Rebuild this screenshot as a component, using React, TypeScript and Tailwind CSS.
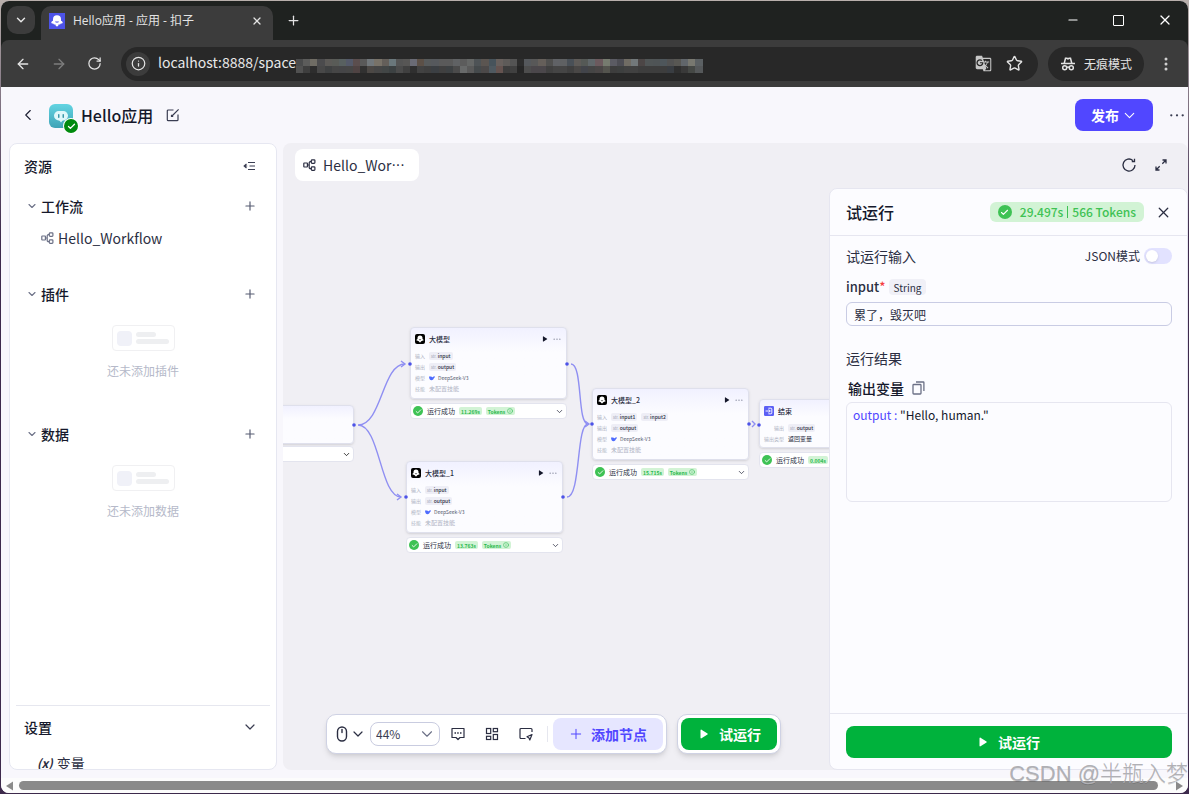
import type { ReactNode } from 'react';
import { ArrowLeft, ArrowRight, Check, ChevronDown, ChevronLeft, Info, Minus, Plus, RotateCw, Star, X } from 'lucide-react';
import { MdGTranslate } from 'react-icons/md';

const maskTop = [
  '#4a4b4c', '#5c5c5b', '#6f6c64', '#4b4b4d', '#5c5a57', '#595b57', '#586060', '#545969', '#5b4e4e', '#595959',
  '#71777b', '#787268', '#645f5a', '#6a777b', '#545454', '#575655', '#6a6b75', '#5c5047', '#575a5b', '#56595d',
  '#5a5a5a', '#5a5a5a', '#606264', '#5c5c5c', '#656766', '#4e5356', '#5b5551', '#47535b', '#68605d', '#5e5b59',
  '#545454', '#2d2d2d', '#55585c', '#585858', '#655f5a', '#50504f', '#606266', '#5f6163', '#495057', '#5e5b58',
  '#555956', '#60676a', '#6c5a5e', '#767b6f', '#5b5b63', '#4d4d54', '#706c64', '#72787a', '#4c4646', '#505556',
  '#4f5456', '#4e565b', '#525252', '#585753', '#61666b', '#787870', '#5b6063',
];

const maskBottom = [
  '#515151', '#3e3e3e', '#2d2d2d', '#484848', '#3f4142', '#464646', '#454547', '#464646', '#4f4343', '#313131',
  '#4c4845', '#464646', '#424646', '#3c4142', '#4b4b4b', '#404040', '#2f2f2f', '#424242', '#3f3f3f', '#3b3f43',
  '#404040', '#3d4143', '#4b4b4b', '#686a6a', '#5a5a5a', '#454a4c', '#4c4949', '#4f5960', '#655350', '#3d3d3d',
  '#404040', '#262626', '#4d4d4d', '#4b474b', '#4b474b', '#404040', '#454545', '#454545', '#3f3f3f', '#494746',
  '#42444a', '#454545', '#4a4646', '#54544e', '#3d3d3d', '#3d3f3f', '#414141', '#414141', '#3d3d3d', '#3d3d3d',
  '#3d3d3d', '#3d3d3d', '#393d42', '#2f2f2f', '#393939', '#454845', '#55585a',
];

const AddressMask = () => (
  <svg width="407" height="14" viewBox="0 0 407 14" shapeRendering="crispEdges" aria-hidden="true">
    {maskTop.map((fill, i) => (
      <rect key={i} x={i * 7.13} y="0" width="8" height="7" fill={fill} />
    ))}
    {maskBottom.map((fill, i) => (
      <rect key={i} x={i * 7.13} y="7" width="8" height="7" fill={fill} />
    ))}
  </svg>
);

const FlowIcon = ({ className }: { className?: string }) => (
  <svg className={className} width="13" height="13" viewBox="0 0 13 13" fill="none" stroke="currentColor" strokeWidth="1.2">
    <rect x="0.8" y="4" width="3.6" height="4" rx="0.4" />
    <rect x="8.3" y="0.8" width="3.6" height="3.6" rx="0.8" />
    <rect x="8.3" y="7.8" width="3.6" height="3.6" rx="0.8" />
    <path d="M4.4 6h1.8M8.3 2.600H7.400a1.200 1.200 0 0 0-1.200 1.200v4.600a1.200 1.200 0 0 0 1.200 1.200h.9" />
  </svg>
);

const CozeLogo = ({ className, face }: { className?: string; face: string }) => (
  <svg className={className} viewBox="0 0 16 16">
    <path
      d="M8 2.200a4 4 0 0 0-4 4v1.600c-.9.300-1.700.900-1.700 1.700 0 1 1 1.300 1.900 1 .2.700.6 1 1.200 1 .4 0 .6-.1.9-.3.2 1.400.8 2.200 1.700 2.200s1.500-.8 1.700-2.200c.3.200.5.300.9.300.6 0 1-.3 1.200-1 .9.300 1.900 0 1.900-1 0-.8-.8-1.400-1.700-1.700V6.200a4 4 0 0 0-4-4z"
      fill="#fff"
    />
    <path d="M6 8.600c.6 1.600 3.400 1.600 4 0z" fill={face} />
  </svg>
);

const IncognitoIcon = () => (
  <svg width="16" height="16" viewBox="0 0 16 16" fill="none" stroke="#e3e3e3" strokeWidth="1.500">
    <path d="M4.300 7 5.500 2.200h1.200l1.300.6 1.300-.6h1.200L11.700 7M1 7.400h14" />
    <circle cx="4.700" cy="11.800" r="2" />
    <circle cx="11.300" cy="11.800" r="2" />
    <path d="M6.700 11.300c.8-.5 1.800-.5 2.600 0" />
  </svg>
);

const PlayIcon = ({ className }: { className?: string }) => (
  <svg className={className} viewBox="0 0 10 10" fill="currentColor">
    <path d="M1.500 1.300c0-.6.6-.9 1-.6l6 3.700c.4.3.4.900 0 1.200l-6 3.700c-.4.3-1 0-1-.6z" />
  </svg>
);

const DotsIcon = ({ className }: { className?: string }) => (
  <svg className={className} viewBox="0 0 14 4" fill="currentColor">
    <circle cx="2" cy="2" r="1" />
    <circle cx="7" cy="2" r="1" />
    <circle cx="12" cy="2" r="1" />
  </svg>
);

const BrowserChrome = () => (
  <header className="shrink-0 font-normal text-[#e3e3e3]">
    <div className="flex h-[39px] items-end bg-[#1f2220] pl-1.5">
      <button aria-label="搜索标签页" className="mb-1.5 flex h-7 w-7 items-center justify-center rounded-[10px] bg-[#3c3c3c]">
        <ChevronDown size={14} strokeWidth={2.5} />
      </button>
      <div className="ml-1.5 flex h-[34px] w-[232px] items-center rounded-t-[10px] bg-[#3c3c3c] pb-1 pl-2 pr-2.5">
        <span className="flex h-4 w-4 items-center justify-center bg-[#4d53e8]">
          <CozeLogo className="h-4 w-4" face="#4d53e8" />
        </span>
        <span className="ml-2 flex-1 font-['Open_Sans','Noto_Sans_CJK_SC',sans-serif] text-xs">Hello应用 - 应用 - 扣子</span>
        <button aria-label="关闭标签页">
          <X size={12} strokeWidth={2.5} />
        </button>
      </div>
      <button aria-label="新标签页" className="mb-3 ml-[13px]">
        <Plus size={15} strokeWidth={2} />
      </button>
      <div className="mb-3 ml-auto flex items-center gap-8 pr-[15px] text-white">
        <button aria-label="最小化"><Minus size={14} strokeWidth={1.800} /></button>
        <button aria-label="最大化">
          <svg width="13" height="13" viewBox="0 0 13 13" fill="none" stroke="currentColor">
            <rect x="1.500" y="1.500" width="10" height="10" rx=".5" />
          </svg>
        </button>
        <button aria-label="关闭"><X size={16} strokeWidth={1.800} /></button>
      </div>
    </div>
    <div className="bg-[#1f2220]">
      <div className="flex h-[47px] items-center rounded-t-lg bg-[#3c3c3c] pl-3.5 pr-5">
        <button aria-label="后退"><ArrowLeft size={16} /></button>
        <button aria-label="前进" className="ml-5 text-[#7d7d7d]"><ArrowRight size={16} /></button>
        <button aria-label="刷新" className="ml-5"><RotateCw size={15} /></button>
        <div className="ml-[19px] flex h-[34px] min-w-0 flex-1 items-center overflow-hidden rounded-full bg-[#282828] pl-[5px] pr-[15px]">
          <span className="flex h-6 w-6 shrink-0 items-center justify-center rounded-full bg-[#3c3c3c]">
            <Info size={15} />
          </span>
          <span className="ml-2 pb-[3px] text-sm text-[#e8e8e8]">localhost:8888/space</span>
          <div className="min-w-0 shrink overflow-hidden pt-1">
            <AddressMask />
          </div>
          <button aria-label="翻译" className="ml-auto text-[#c7c7c7]"><MdGTranslate size={17} /></button>
          <button aria-label="收藏" className="ml-3.5"><Star size={17} /></button>
        </div>
        <div className="ml-2.5 flex h-[34px] items-center gap-2 rounded-full bg-[#282828] px-3 text-xs">
          <IncognitoIcon />
          无痕模式
        </div>
        <button aria-label="菜单" className="ml-5">
          <svg width="4" height="14" viewBox="0 0 4 14" fill="#d0d0d0">
            <circle cx="2" cy="2" r="1.500" />
            <circle cx="2" cy="7" r="1.500" />
            <circle cx="2" cy="12" r="1.500" />
          </svg>
        </button>
      </div>
    </div>
  </header>
);

const AppHeader = () => (
  <div className="flex h-14 shrink-0 items-center pl-[18px] pr-[3px]">
    <button aria-label="返回"><ChevronLeft size={18} strokeWidth={1.500} className="text-[#1c1f33]" /></button>
    <div className="relative ml-3 mt-0.5 h-6 w-6">
      <svg width="24" height="24" viewBox="0 0 24 24">
        <defs>
          <linearGradient id="app-bg" x1="0" y1="0" x2="0" y2="1">
            <stop offset="0" stopColor="#63d4e2" />
            <stop offset="1" stopColor="#3fa3b6" />
          </linearGradient>
        </defs>
        <rect width="24" height="24" rx="6" fill="url(#app-bg)" />
        <rect x="5" y="7" width="14" height="9.500" rx="4.700" fill="#e0f8fa" />
        <path d="M10 16h4l-2 2.500z" fill="#e0f8fa" />
        <rect x="9" y="10" width="1.500" height="4" rx=".7" fill="#3a97a8" />
        <rect x="13.500" y="10" width="1.500" height="4" rx=".7" fill="#3a97a8" />
      </svg>
      <span className="absolute -bottom-[5px] -right-[5px] flex h-3.5 w-3.5 items-center justify-center rounded-full bg-[#008a0e] text-white ring-1 ring-white">
        <Check size={9} strokeWidth={3.500} />
      </span>
    </div>
    <h1 className="ml-2 text-base font-medium text-[#15182b]">Hello应用</h1>
    <button aria-label="编辑" className="ml-[13px] text-[#3a3d52]">
      <svg width="14" height="14" viewBox="0 0 14 14" fill="none" stroke="currentColor" strokeWidth="1.200">
        <path d="M7.500 2H2.300a1 1 0 0 0-1 1v8.700a1 1 0 0 0 1 1H11a1 1 0 0 0 1-1V6.500M12.600 1.400 6 8M5.500 6.800v1.700h1.700" />
      </svg>
    </button>
    <button className="ml-auto flex h-8 items-center gap-0.5 rounded-lg bg-[#5147ff] pl-4 pr-[15px] text-sm font-bold text-white">
      发布
      <ChevronDown size={17} strokeWidth={1.500} />
    </button>
    <button aria-label="更多" className="ml-4 text-[#3a3d52]"><DotsIcon className="w-4" /></button>
  </div>
);

const EmptyState = ({ text }: { text: string }) => (
  <div className="mt-[15px] flex flex-col items-center gap-3">
    <div className="flex h-[26px] w-[63px] items-center gap-1 rounded border border-[#f0f0f2] pl-1">
      <span className="h-[15px] w-[15px] rounded bg-[#f0f1f8]" />
      <span className="flex flex-col gap-0.5">
        <span className="h-[5px] w-5 rounded-sm bg-[#eeeff1]" />
        <span className="h-[5px] w-[33px] rounded-sm bg-[#eeeff1]" />
      </span>
    </div>
    <p className="text-xs leading-4 text-[#b5b9c9]">{text}</p>
  </div>
);

const SectionHead = ({ title }: { title: string }) => (
  <div className="flex h-8 items-center pl-4 pr-[19px]">
    <ChevronDown size={12} strokeWidth={2.200} className="text-[#6b7086]" />
    <h3 className="ml-[3px] text-sm font-medium text-[#15182b]">{title}</h3>
    <button aria-label={`添加${title}`} className="ml-auto text-[#555a70]"><Plus size={14} strokeWidth={2} /></button>
  </div>
);

const Sidebar = () => (
  <aside className="flex w-[268px] shrink-0 flex-col overflow-hidden rounded-lg border border-[#e6e7f1] bg-white">
    <div className="flex h-11 items-center pl-3.5 pr-5">
      <h2 className="text-sm font-medium text-[#15182b]">资源</h2>
      <button aria-label="收起" className="ml-auto text-[#3a3d52]">
        <svg width="13" height="12" viewBox="0 0 13 12" fill="none" stroke="currentColor" strokeWidth="1.200">
          <path d="M5 2.500h7M6.500 6H12M5 9.500h7M3.500 4 1.200 6l2.300 2M1.200 6h3" />
        </svg>
      </button>
    </div>
    <div className="mt-0.5 h-[72px]">
      <SectionHead title="工作流" />
      <a href="#workflow" className="flex h-8 items-center gap-1 pl-[31px] text-sm text-[#2b2e42]">
        <FlowIcon className="text-[#6b7086]" />
        Hello_Workflow
      </a>
    </div>
    <div className="mt-4 h-[124px]">
      <SectionHead title="插件" />
      <EmptyState text="还未添加插件" />
    </div>
    <div className="mt-4 flex-1">
      <SectionHead title="数据" />
      <EmptyState text="还未添加数据" />
    </div>
    <div className="mx-1.5 h-16 overflow-hidden border-t border-[#e6e7ef]">
      <div className="flex h-[42px] items-center pl-2 pr-3">
        <h2 className="text-sm font-medium text-[#15182b]">设置</h2>
        <ChevronDown size={16} strokeWidth={1.800} className="ml-auto text-[#3a3d52]" />
      </div>
      <a href="#variables" className="flex h-[30px] items-center gap-1 pl-[21px] text-sm text-[#2b2e42]">
        <span className="text-xs font-bold italic">(x)</span>
        变量
      </a>
    </div>
  </aside>
);

const Tag = ({ children }: { children: ReactNode }) => (
  <span className="flex h-2 items-center gap-px rounded-xs bg-[#eeeef6] px-0.5 font-medium text-[#2b2e42]">
    <span className="text-[4px] font-normal text-[#9a9eb2]">str.</span>
    {children}
  </span>
);

const Field = ({ label, children }: { label: string; children: ReactNode }) => (
  <div className="flex h-[11px] items-center gap-1">
    <span className="text-[#b0b4c4]">{label}</span>
    {children}
  </div>
);

const RunStatus = ({ time, tokens }: { time: string; tokens?: boolean }) => (
  <div className="mt-1 flex h-4 items-center gap-1 rounded-sm border border-[#e3e4ee] bg-white px-0.5 text-[7px] text-[#2b2e42]">
    <span className="flex h-2.5 w-2.5 items-center justify-center rounded-full bg-[#3ec254] text-white">
      <Check size={7} strokeWidth={3} />
    </span>
    运行成功
    <span className="flex h-2 items-center rounded-xs bg-[#d2f3d5] px-0.5 text-[5px] font-bold text-[#25b94b]">{time}</span>
    {tokens && (
      <>
        <span className="flex h-2 items-center gap-0.5 rounded-xs bg-[#d2f3d5] px-0.5 text-[5px] font-bold text-[#25b94b]">
          Tokens
          <Info size={6} />
        </span>
        <ChevronDown size={9} className="ml-auto" />
      </>
    )}
  </div>
);

const cardClass = 'rounded-sm border border-[#dfe0ec] bg-linear-to-b from-[#f1f1ff] to-[#fcfcff] to-35% px-1 text-[5px] leading-none shadow-sm';

const ModelNode = ({ title, inputs, time, className }: { title: string; inputs: string[]; time: string; className: string }) => (
  <article className={`absolute w-[157px] leading-none ${className}`}>
    <div className={`h-[72px] ${cardClass}`}>
      <div className="flex h-[22px] items-center pr-px">
        <span className="flex h-2.5 w-2.5 items-center justify-center rounded-xs bg-black">
          <CozeLogo className="h-2.5 w-2.5" face="#000" />
        </span>
        <h4 className="ml-1 text-[7px] font-medium text-[#2b2e42]">{title}</h4>
        <PlayIcon className="ml-auto h-1.5 w-1.5 text-[#15182b]" />
        <DotsIcon className="ml-[5px] w-2 text-[#6b7086]" />
      </div>
      <Field label="输入">
        {inputs.map((name) => (
          <Tag key={name}>{name}</Tag>
        ))}
      </Field>
      <Field label="输出"><Tag>output</Tag></Field>
      <Field label="模型">
        <svg width="6" height="6" viewBox="0 0 12 12" fill="#4d6bfe">
          <path d="M0 3c2 0 4-.5 6 1 1.500 1 2.500.5 3-1.500C9.500 3.500 11 3 12 2.500c0 2-1 3-2 3.200C9.500 9 7.500 10.500 5 10.500 2 10.500 0 7.500 0 3z" />
        </svg>
        <span className="-ml-px text-[#55596e]">DeepSeek-V3</span>
      </Field>
      <Field label="技能"><span className="text-[6px] text-[#b0b4c4]">未配置技能</span></Field>
    </div>
    <RunStatus time={time} tokens />
  </article>
);

const ports = [
  [71, 237], [127, 176], [284, 176], [123, 309], [280, 309], [309, 236], [466, 236], [476, 237],
];

const Edges = () => (
  <svg className="absolute left-0 top-0" width="546" height="582" fill="none" stroke="#8f8ff2" strokeWidth="1.400">
    <path d="M75 237c24 0 24-61 47-61M75 237c22 0 22 72 43 72M288 176c12 0 6 60 17 60M284 309c14 0 9-73 21-73" />
    <path d="m118 173 4 3-4 3M114 306l4 3-4 3M302 233l4 3-4 3M469 233l3 3-3 3" />
  </svg>
);

const Ports = () => (
  <svg className="pointer-events-none absolute left-0 top-0" width="546" height="582" fill="#4d53e8">
    {ports.map(([x, y]) => (
      <circle key={`${x}-${y}`} cx={x} cy={y} r="1.800" />
    ))}
  </svg>
);

const CanvasToolbar = () => (
  <div className="absolute inset-x-0 bottom-4 flex justify-center gap-2.5 pr-[5px]">
    <div className="flex h-10 items-center rounded-[10px] border border-[#cfd2e4] bg-white pl-[9px] pr-[3px] text-[#2b2e42] shadow-md">
      <button aria-label="鼠标模式" className="flex items-center gap-0.5">
        <svg width="12" height="16" viewBox="0 0 12 16" fill="none" stroke="currentColor" strokeWidth="1.400">
          <rect x="1.500" y="1" width="9" height="14" rx="4.500" />
          <path d="M6 3.500v3" strokeLinecap="round" />
        </svg>
        <ChevronDown size={16} strokeWidth={1.800} />
      </button>
      <div className="relative ml-1">
        <select aria-label="缩放" className="block h-6 w-[70px] appearance-none rounded-lg border border-[#c9cce0] bg-white pl-[5px] text-xs leading-5 text-[#3a3d52]">
          <option>44%</option>
        </select>
        <ChevronDown size={18} strokeWidth={1.500} className="pointer-events-none absolute right-1 top-[3px] text-[#6b7086]" />
      </div>
      <button aria-label="注释" className="ml-2.5">
        <svg width="16" height="16" viewBox="0 0 16 16" fill="none" stroke="currentColor" strokeWidth="1.200">
          <path d="M2 2.500h12v9h-4l-2 2-2-2H2z" strokeLinejoin="round" />
          <path d="M4.500 7H6M7.200 7h1.500M10 7h1.500" strokeWidth="1.400" />
        </svg>
      </button>
      <button aria-label="优化布局" className="ml-[18px]">
        <svg width="16" height="16" viewBox="0 0 16 16" fill="none" stroke="currentColor" strokeWidth="1.200">
          <rect x="2.500" y="2.500" width="4.200" height="5" />
          <rect x="9.300" y="2.500" width="4.200" height="3.200" />
          <rect x="2.500" y="10.300" width="4.200" height="3.200" />
          <rect x="9.300" y="8.500" width="4.200" height="5" />
        </svg>
      </button>
      <button aria-label="调试" className="ml-[18px]">
        <svg width="16" height="16" viewBox="0 0 16 16" fill="none" stroke="currentColor" strokeWidth="1.200" strokeLinejoin="round">
          <path d="M7.500 12.500H3a1 1 0 0 1-1-1v-8a1 1 0 0 1 1-1h10a1 1 0 0 1 1 1V6M14 8.500l-5 2.300 2 1.200.8 2z" />
        </svg>
      </button>
      <span className="ml-[13px] h-4 w-px bg-[#e6e7ef]" />
      <button className="ml-[5px] flex h-8 items-center gap-[7px] rounded-lg bg-[#e6e6ff] pl-[15px] pr-4 text-sm font-bold text-[#5147ff]">
        <Plus size={16} strokeWidth={1.500} />
        添加节点
      </button>
    </div>
    <div className="flex h-10 items-center rounded-[10px] border border-[#cfd2e4] bg-white px-[3px] shadow-md">
      <button className="flex h-8 items-center gap-2.5 rounded-lg bg-[#00b23c] pl-[18px] pr-4 text-sm font-bold text-white">
        <PlayIcon className="h-2.5 w-2.5" />
        试运行
      </button>
    </div>
  </div>
);

const Canvas = () => (
  <section className="relative min-w-0 flex-1 overflow-hidden">
    <Edges />
    <article className="absolute left-[-86px] top-[217px] w-[157px] leading-none">
      <div className={`h-[39px] ${cardClass}`} />
      <div className="mt-0.5 flex h-4 items-center justify-end rounded-sm border border-[#e3e4ee] bg-white px-0.5">
        <ChevronDown size={9} />
      </div>
    </article>
    <ModelNode title="大模型" inputs={['input']} time="11.269s" className="left-[127px] top-[139px]" />
    <ModelNode title="大模型_1" inputs={['input']} time="13.763s" className="left-[123px] top-[273px]" />
    <ModelNode title="大模型_2" inputs={['input1', 'input2']} time="15.715s" className="left-[309px] top-[200px]" />
    <article className="absolute left-[476px] top-[211px] w-[157px] leading-none">
      <div className={`h-[49px] ${cardClass}`}>
        <div className="flex h-[22px] items-center gap-1">
          <svg width="10" height="10" viewBox="0 0 16 16" fill="none" stroke="#fff" strokeWidth="1.500">
            <rect width="16" height="16" rx="2" fill="#5b5ff5" stroke="none" />
            <path d="M7 3.500h4A1.500 1.500 0 0 1 12.500 5v6a1.500 1.500 0 0 1-1.500 1.500H7M2.500 8H10M7.500 5.500 10 8l-2.500 2.500" />
          </svg>
          <h4 className="text-[7px] font-medium text-[#2b2e42]">结束</h4>
        </div>
        <div className="pl-2.5">
          <Field label="输出"><Tag>output</Tag></Field>
        </div>
        <Field label="输出类型"><span className="text-[6px] text-[#2b2e42]">返回变量</span></Field>
      </div>
      <RunStatus time="0.004s" />
    </article>
    <Ports />
    <CanvasToolbar />
  </section>
);

const RunPanel = () => (
  <section className="flex w-[359px] shrink-0 flex-col rounded-lg border border-[#e6e6f0] bg-[#fcfcff] text-[#2b2e42]">
    <div className="flex h-[47px] shrink-0 items-center border-b border-[#e6e6f0] pl-4 pr-[15px]">
      <h2 className="text-base font-medium text-[#15182b]">试运行</h2>
      <div className="ml-auto flex h-5 items-center rounded-md bg-[#d2f3d5] px-2 text-xs font-medium text-[#3ec254]">
        <span className="mr-2 flex h-3.5 w-3.5 items-center justify-center rounded-full bg-[#3ec254] text-white">
          <Check size={9} strokeWidth={3} />
        </span>
        29.497s
        <span className="mx-1 h-3 w-px bg-[#3ec254]" />
        566 Tokens
      </div>
      <button aria-label="关闭" className="ml-[11px]"><X size={17} strokeWidth={1.800} /></button>
    </div>
    <div className="min-h-0 flex-1 pl-4 pr-[15px] pt-[9px]">
      <div className="flex h-[22px] items-center">
        <h3 className="text-sm">试运行输入</h3>
        <label className="ml-auto flex items-center gap-1 text-xs">
          JSON模式
          <input
            type="checkbox"
            role="switch"
            className="h-4 w-7 appearance-none rounded-full bg-[#e2e2ff] before:ml-0.5 before:mt-0.5 before:block before:h-3 before:w-3 before:rounded-full before:bg-white before:shadow-sm"
          />
        </label>
      </div>
      <div className="mt-2.5 flex h-5 items-center">
        <label htmlFor="run-input" className="text-[13px] font-medium">
          input<span className="text-[#f53f3f]">*</span>
        </label>
        <span className="ml-[3px] flex h-4 items-center rounded bg-[#f0f0f7] px-[5px] text-[10px]">String</span>
      </div>
      <input
        id="run-input"
        defaultValue="累了，毁灭吧"
        className="mt-[5px] block h-6 w-full rounded-md border border-[#c9cce4] bg-transparent px-[7px] text-xs"
      />
      <h3 className="mt-[21px] text-sm leading-[22px]">运行结果</h3>
      <div className="mt-2 flex h-[22px] items-center gap-2 pl-0.5">
        <h4 className="text-sm font-medium text-[#15182b]">输出变量</h4>
        <button aria-label="复制" className="text-[#6b7086]">
          <svg width="13" height="14" viewBox="0 0 13 14" fill="none" stroke="currentColor" strokeWidth="1.300">
            <rect x="1" y="3.500" width="8" height="9.500" rx=".8" />
            <path d="M4 1h7.300a.6.600 0 0 1 .6.600V10" />
          </svg>
        </button>
      </div>
      <div className="mt-[3px] h-[100px] rounded-md border border-[#e6e6f0] px-1.5 pt-1 text-xs leading-4">
        <span className="text-[#5147ff]">output :</span> <span className="text-[#15182b]">"Hello, human."</span>
      </div>
    </div>
    <div className="shrink-0 border-t border-[#e6e6f0] pb-[11px] pl-4 pr-[15px] pt-3">
      <button className="flex h-8 w-full items-center justify-center gap-2.5 rounded-lg bg-[#00b23c] text-sm font-bold text-white">
        <PlayIcon className="h-2.5 w-2.5" />
        试运行
      </button>
    </div>
  </section>
);

const Workspace = () => (
  <main className="flex min-w-0 flex-1 flex-col rounded-lg bg-[#f0eff4]">
    <div className="flex h-[45px] shrink-0 items-center pb-px pl-3 pr-5 text-[#2b2e42]">
      <button className="flex h-8 items-center rounded-lg bg-white pl-2 pr-3.5 text-sm">
        <FlowIcon className="mr-[7px]" />
        Hello_Wor<span className="font-['DejaVu_Sans',sans-serif]">···</span>
      </button>
      <button aria-label="刷新" className="ml-auto">
        <svg width="16" height="16" viewBox="0 0 16 16" fill="none" stroke="currentColor" strokeWidth="1.300">
          <path d="M14 8A6 6 0 1 1 11.800 3.400M13.500 1.800v2.700h-2.700" />
        </svg>
      </button>
      <button aria-label="全屏" className="ml-[17px]">
        <svg width="14" height="14" viewBox="0 0 14 14" fill="none" stroke="currentColor" strokeWidth="1.300">
          <path d="M8.500 2H12v3.500M12 2 8.300 5.700M5.500 12H2V8.500M2 12l3.700-3.700" />
        </svg>
      </button>
    </div>
    <div className="flex min-h-0 flex-1">
      <Canvas />
      <RunPanel />
    </div>
  </main>
);

const Scrollbar = () => (
  <div className="flex h-[15px] shrink-0 items-center bg-[#fcfcfc] pl-1 pr-1" aria-hidden="true">
    <svg width="9" height="10" viewBox="0 0 9 10" fill="#8a8a8a"><path d="M8 .5v9L1 5z" /></svg>
    <div className="ml-[5px] mr-[17px] h-[9px] flex-1 rounded-full bg-[#8a8a8a]" />
    <svg width="9" height="10" viewBox="0 0 9 10" fill="#8a8a8a"><path d="M1 .5v9L8 5z" /></svg>
  </div>
);

const App = () => {
  return (
    <div className="relative h-screen overflow-hidden bg-linear-to-b from-[#b9b0ac] to-[#3d2a4c] to-30% p-px font-['Noto_Sans_CJK_SC',sans-serif]">
      <div className="flex h-full flex-col overflow-hidden rounded-lg bg-[#f8f7fc]">
        <BrowserChrome />
        <AppHeader />
        <div className="flex min-h-0 flex-1 gap-1.5 pb-2 pl-2">
          <Sidebar />
          <Workspace />
        </div>
        <Scrollbar />
      </div>
      <div className="pointer-events-none absolute bottom-1 right-px whitespace-nowrap font-['Liberation_Sans','Noto_Sans_CJK_SC',sans-serif] text-[22px] font-light leading-8 text-[#b0b0b5] text-shadow-2xs">
        CSDN @半瓶入梦
      </div>
    </div>
  );
};

export default App;
